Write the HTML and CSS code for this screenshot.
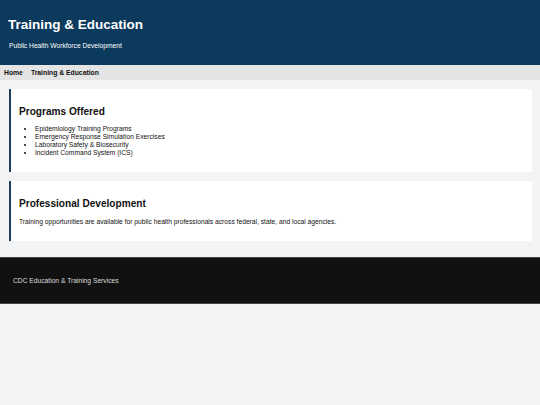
FILE: index.html
```html
<!DOCTYPE html>
<html lang="en">
<head>
    <title>Training &amp; Education</title>
    <link rel="stylesheet" href="styles.css">
</head>
<body>
    <div class="header">
        <h1>Training &amp; Education</h1>
        <p>Public Health Workforce Development</p>
    </div>

    <div class="nav">
        <a href="#">Home</a>
        <a href="#">Training &amp; Education</a>
    </div>

    <div class="main">
        <div class="section">
            <h2>Programs Offered</h2>
            <ul>
                <li>Epidemiology Training Programs</li>
                <li>Emergency Response Simulation Exercises</li>
                <li>Laboratory Safety &amp; Biosecurity</li>
                <li>Incident Command System (ICS)</li>
            </ul>
        </div>

        <div class="section">
            <h2>Professional Development</h2>
            <p>Training opportunities are available for public health professionals across federal, state, and local agencies.</p>
        </div>
    </div>

    <div class="footer">
        <p>CDC Education &amp; Training Services</p>
    </div>
</body>
</html>
```

FILE: styles.css
```css
body {
    font-family: "Liberation Sans", Arial, sans-serif;
    margin: 0;
    background-color: #f3f4f6;
    color: #111;
}

.header {
    background-color: #0b3a5c;
    color: white;
    height: 65px;
    box-sizing: border-box;
    padding: 17px 8px 0 8px;
}

.header h1 {
    margin: 0;
    font-size: 13.5px;
    font-weight: bold;
}

.header p {
    margin: 10px 0 0 1px;
    font-size: 6.7px;
}

.nav {
    display: flex;
    align-items: center;
    gap: 8px;
    height: 15px;
    padding: 0 4px;
    background-color: #e4e4e4;
}

.nav a {
    color: #111;
    text-decoration: none;
    font-size: 6.8px;
    font-weight: bold;
}

.main {
    display: flex;
    flex-direction: column;
    gap: 9px;
    padding: 9px 8px 16px 9px;
}

.section {
    background-color: white;
    border-left: 2px solid #1d3f5e;
    padding: 17px 10px 16px 8px;
}

.section h2 {
    margin: 0 0 9px 0;
    font-size: 10.1px;
    font-weight: bold;
}

.section ul {
    margin: -1px 0 -1px 0;
    padding-left: 16px;
    font-size: 6.7px;
    line-height: 8px;
}

.section p {
    margin: 0;
    font-size: 6.7px;
}

.footer {
    background-color: #111;
    border-top: 1px solid #444;
    border-bottom: 1px solid #444;
    height: 47px;
    box-sizing: border-box;
    padding: 0 13px;
    display: flex;
    align-items: center;
    color: #ddd;
}

.footer p {
    margin: 0;
    font-size: 6.7px;
}
```
